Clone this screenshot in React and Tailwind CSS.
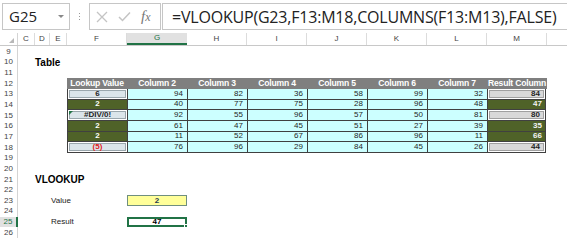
import React from 'react';

const ROW_H = 'h-[10.67px]';

const data = [
    { key: '6', keyStyle: 'light', vals: [94, 82, 36, 58, 99, 32], res: 84, resStyle: 'light' },
    { key: '2', keyStyle: 'dark', vals: [40, 77, 75, 28, 96, 48], res: 47, resStyle: 'dark' },
    { key: '#DIV/0!', keyStyle: 'light', err: true, vals: [92, 55, 96, 57, 50, 81], res: 80, resStyle: 'light' },
    { key: '2', keyStyle: 'dark', vals: [61, 47, 45, 51, 27, 39], res: 35, resStyle: 'dark' },
    { key: '2', keyStyle: 'dark', vals: [11, 52, 67, 86, 96, 11], res: 66, resStyle: 'dark' },
    { key: '(5)', keyStyle: 'light', red: true, vals: [76, 96, 29, 84, 45, 26], res: 44, resStyle: 'light' },
];

const headers = ['Lookup Value', 'Column 2', 'Column 3', 'Column 4', 'Column 5', 'Column 6', 'Column 7', 'Result Column'];

function RowNum({ n, active }) {
    return (
        <div
            className={`w-[18px] shrink-0 h-full flex items-center justify-center text-[8px] border-r ${
                active ? 'bg-[#e1e1e1] text-[#217346] border-r-2 border-[#217346]' : 'text-[#444] border-[#d4d4d4]'
            }`}
        >
            {n}
        </div>
    );
}

function Row({ n, active, children }) {
    return (
        <div className={`flex ${ROW_H} items-stretch`}>
            <RowNum n={n} active={active} />
            {children}
        </div>
    );
}

export default function App() {
    return (
        <div className="w-[567px] h-[240px] overflow-hidden bg-white font-['Liberation_Sans',Arial,sans-serif] text-black">
            {/* Formula bar */}
            <div className="h-[33px] flex items-start pt-[3px] bg-white">
                <div className="ml-[2px] w-[68px] h-[27px] border border-[#c6c6c6] flex items-center justify-between pl-[6px] pr-[5px]">
                    <span className="text-[15px] text-[#222] font-['Open_Sans',sans-serif] leading-none">G25</span>
                    <svg width="6" height="4" viewBox="0 0 6 4">
                        <path d="M0 0 L6 0 L3 3 Z" fill="#888" />
                    </svg>
                </div>
                <div className="w-[19px] h-[27px] flex flex-col items-center justify-center gap-[2px]">
                    <span className="w-[1px] h-[1px] bg-[#999]" />
                    <span className="w-[1px] h-[1px] bg-[#999]" />
                    <span className="w-[1px] h-[1px] bg-[#999]" />
                </div>
                <div className="w-[72px] h-[27px] border border-[#c6c6c6] flex items-center pl-[6px] gap-[10px]">
                    <svg width="12" height="12" viewBox="0 0 12 12">
                        <path d="M1 1 L11 11 M11 1 L1 11" stroke="#c4c4c4" strokeWidth="1.3" fill="none" />
                    </svg>
                    <svg width="13" height="11" viewBox="0 0 13 11">
                        <path d="M1 6 L4.5 9.5 L12 1.5" stroke="#c4c4c4" strokeWidth="1.5" fill="none" />
                    </svg>
                    <span className="text-[15px] italic text-[#777] font-['Liberation_Serif',serif] leading-none">
                        f<span className="text-[12px]">x</span>
                    </span>
                </div>
                <div className="ml-[1px] flex-1 h-[27px] border border-r-0 border-[#c6c6c6] flex items-center pl-[9px]">
                    <span className="text-[16px] text-[#222] font-['Open_Sans',sans-serif] leading-none tracking-[-0.2px]">
                        =VLOOKUP(G23,F13:M18,COLUMNS(F13:M13),FALSE)
                    </span>
                </div>
            </div>

            {/* Column headers */}
            <div className="flex h-[13.3px] border-b border-[#c8c8c8] text-[8px] text-[#444]">
                <div className="w-[18px] shrink-0 border-r border-[#d4d4d4] flex items-end justify-end pr-[3px] pb-[2px]">
                    <svg width="5" height="5" viewBox="0 0 5 5">
                        <path d="M5 0 L5 5 L0 5 Z" fill="#b8b8b8" />
                    </svg>
                </div>
                {[
                    ['C', 'w-[17px]'],
                    ['D', 'w-[15px]'],
                    ['E', 'w-[17px]'],
                    ['F', 'w-[60px]'],
                ].map(([c, w]) => (
                    <div key={c} className={`${w} shrink-0 flex items-center justify-center border-r border-[#dcdcdc]`}>
                        {c}
                    </div>
                ))}
                <div className="w-[60px] shrink-0 flex items-center justify-center bg-[#e1e1e1] border-b-2 border-[#217346] text-[#217346]">
                    G
                </div>
                {['H', 'I', 'J', 'K', 'L', 'M'].map((c) => (
                    <div key={c} className="w-[60px] shrink-0 flex items-center justify-center border-r border-[#dcdcdc]">
                        {c}
                    </div>
                ))}
                <div className="flex-1" />
            </div>

            {/* Sheet */}
            <Row n={9} />
            <Row n={10}>
                <div className="w-[17px] shrink-0" />
                <div className="flex items-center text-[10px] font-bold">Table</div>
            </Row>
            <Row n={11} />
            <Row n={12}>
                <div className="w-[49px] shrink-0" />
                {headers.map((h) => (
                    <div
                        key={h}
                        className="w-[60px] shrink-0 bg-[#7f7f7f] text-white font-bold text-[8.6px] tracking-[-0.2px] whitespace-nowrap overflow-hidden flex items-center justify-center"
                    >
                        {h}
                    </div>
                ))}
            </Row>
            {data.map((r, i) => (
                <Row key={i} n={13 + i}>
                    <div className="w-[49px] shrink-0" />
                    <div className={`w-[60px] shrink-0 border-l border-b border-[#404040] ${r.keyStyle === 'light' ? 'p-[1px]' : ''}`}>
                        <div
                            className={`relative w-full h-full flex items-center justify-center text-[8px] font-bold ${
                                r.keyStyle === 'light'
                                    ? 'bg-[#dbe5ea] border border-[#9aa7ad] ' + (r.red ? 'text-[#e0201a]' : 'text-[#1f1f1f]')
                                    : 'bg-[#4f6228] text-white'
                            }`}
                        >
                            {r.err && (
                                <span className="absolute left-[-1px] top-[-1px] w-0 h-0 border-t-[4px] border-r-[4px] border-t-[#217346] border-r-transparent" />
                            )}
                            {r.key}
                        </div>
                    </div>
                    {r.vals.map((v, j) => (
                        <div
                            key={j}
                            className="w-[60px] shrink-0 bg-[#ccffff] border-l border-b border-[#404040] flex items-center justify-end pr-[4px] text-[8px] text-[#1f1f1f]"
                        >
                            {v}
                        </div>
                    ))}
                    <div
                        className={`w-[59px] shrink-0 border-l border-b border-r border-[#404040] ${r.resStyle === 'light' ? 'p-[1px]' : ''}`}
                    >
                        <div
                            className={`w-full h-full flex items-center justify-end pr-[3px] text-[8px] font-bold ${
                                r.resStyle === 'light'
                                    ? 'bg-[#d9d9d9] border border-[#a0a0a0] text-[#1f1f1f]'
                                    : 'bg-[#4f6228] text-[#f2f2f2]'
                            }`}
                        >
                            {r.res}
                        </div>
                    </div>
                </Row>
            ))}
            <Row n={19} />
            <Row n={20} />
            <Row n={21}>
                <div className="w-[17px] shrink-0" />
                <div className="flex items-center text-[10px] font-bold">VLOOKUP</div>
            </Row>
            <Row n={22} />
            <Row n={23}>
                <div className="w-[33px] shrink-0" />
                <div className="w-[76px] shrink-0 flex items-center text-[8px] text-[#222]">Value</div>
                <div className="w-[60px] shrink-0 bg-[#ffff99] border border-[#6f8f7f] flex items-center justify-center text-[8px] font-bold text-[#1f3a4f]">
                    2
                </div>
            </Row>
            <Row n={24} />
            <Row n={25} active>
                <div className="w-[33px] shrink-0" />
                <div className="w-[76px] shrink-0 flex items-center text-[8px] text-[#222]">Result</div>
                <div className="relative w-[60px] shrink-0 bg-white border-2 border-[#217346] flex items-center justify-center text-[8px] font-bold">
                    47
                    <span className="absolute right-[-3px] bottom-[-3px] w-[4px] h-[4px] bg-[#217346] border border-white" />
                </div>
            </Row>
            <Row n={26} />
        </div>
    );
}
